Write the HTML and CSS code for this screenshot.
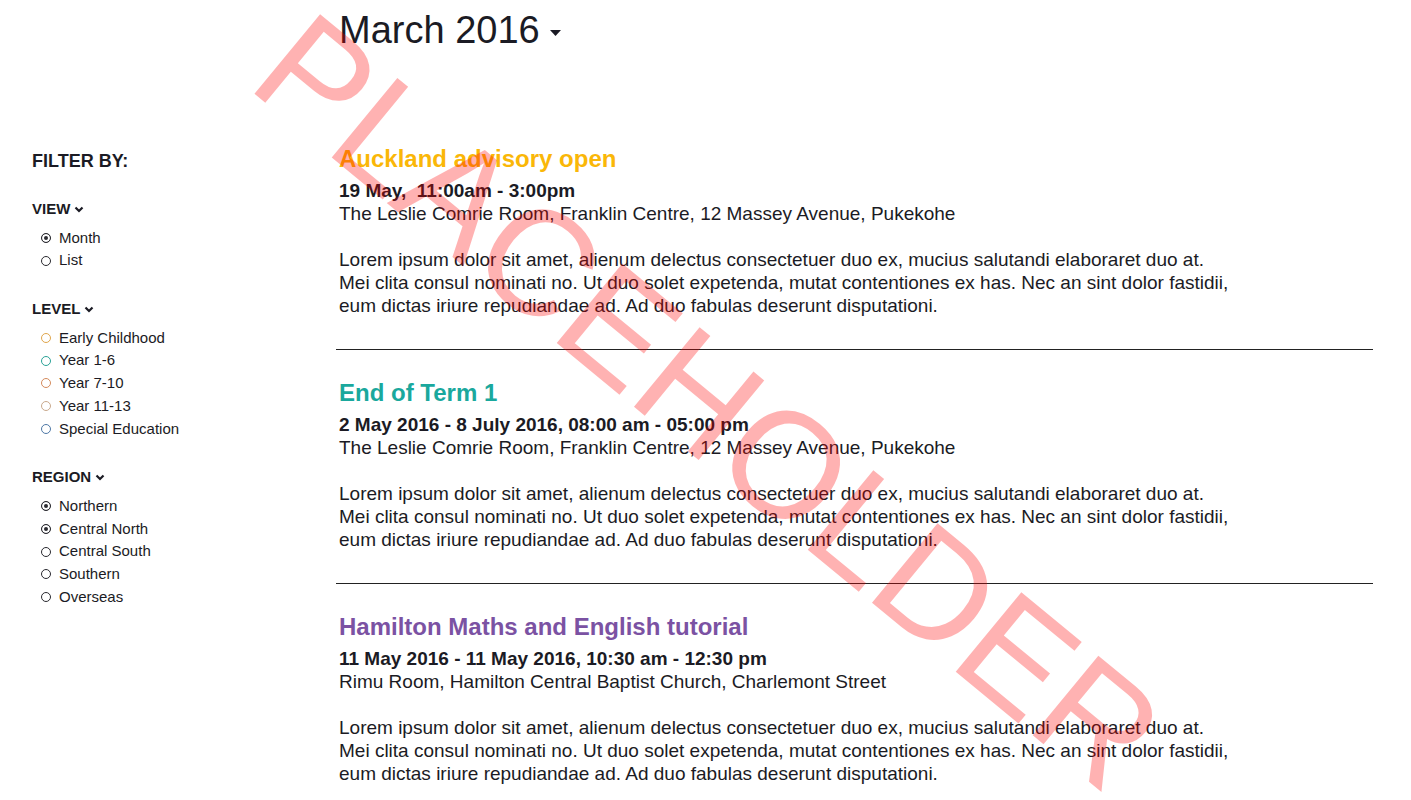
FILE: index.html
```html
<!DOCTYPE html>
<html lang="en">
<head>
<meta charset="utf-8">
<title>Events</title>
<link rel="stylesheet" href="styles.css">
</head>
<body>
<div class="page">
  <aside class="sidebar">
    <h3 class="filter-title">FILTER BY:</h3>

    <div class="group">
      <h4 class="group-title">VIEW <svg class="chev" width="10" height="7" viewBox="0 0 10 7"><polyline points="1.5,1.5 5,5 8.5,1.5" fill="none" stroke="#1b1b24" stroke-width="2.2"/></svg></h4>
      <ul class="options">
        <li><span class="radio checked"></span>Month</li>
        <li><span class="radio"></span>List</li>
      </ul>
    </div>

    <div class="group">
      <h4 class="group-title">LEVEL <svg class="chev" width="10" height="7" viewBox="0 0 10 7"><polyline points="1.5,1.5 5,5 8.5,1.5" fill="none" stroke="#1b1b24" stroke-width="2.2"/></svg></h4>
      <ul class="options">
        <li><span class="radio early"></span>Early Childhood</li>
        <li><span class="radio y16"></span>Year 1-6</li>
        <li><span class="radio y710"></span>Year 7-10</li>
        <li><span class="radio y1113"></span>Year 11-13</li>
        <li><span class="radio special"></span>Special Education</li>
      </ul>
    </div>

    <div class="group">
      <h4 class="group-title">REGION <svg class="chev" width="10" height="7" viewBox="0 0 10 7"><polyline points="1.5,1.5 5,5 8.5,1.5" fill="none" stroke="#1b1b24" stroke-width="2.2"/></svg></h4>
      <ul class="options">
        <li><span class="radio checked"></span>Northern</li>
        <li><span class="radio checked"></span>Central North</li>
        <li><span class="radio"></span>Central South</li>
        <li><span class="radio"></span>Southern</li>
        <li><span class="radio"></span>Overseas</li>
      </ul>
    </div>
  </aside>

  <main class="main">
    <h1 class="month">March 2016<svg class="caret" width="11" height="6" viewBox="0 0 11 6"><polygon points="0,0 11,0 5.5,6" fill="#1b1b24"/></svg></h1>

    <div class="events">
      <article class="event">
        <h2 class="event-title auckland">Auckland advisory open</h2>
        <div class="when">19 May,&nbsp; 11:00am - 3:00pm</div>
        <div class="where">The Leslie Comrie Room, Franklin Centre, 12 Massey Avenue, Pukekohe</div>
        <p class="desc">Lorem ipsum dolor sit amet, alienum delectus consectetuer duo ex, mucius salutandi elaboraret duo at. Mei clita consul nominati no. Ut duo solet expetenda, mutat contentiones ex has. Nec an sint dolor fastidii, eum dictas iriure repudiandae ad. Ad duo fabulas deserunt disputationi.</p>
      </article>
      <article class="event">
        <h2 class="event-title term">End of Term 1</h2>
        <div class="when">2 May 2016 - 8 July 2016, 08:00 am - 05:00 pm</div>
        <div class="where">The Leslie Comrie Room, Franklin Centre, 12 Massey Avenue, Pukekohe</div>
        <p class="desc">Lorem ipsum dolor sit amet, alienum delectus consectetuer duo ex, mucius salutandi elaboraret duo at. Mei clita consul nominati no. Ut duo solet expetenda, mutat contentiones ex has. Nec an sint dolor fastidii, eum dictas iriure repudiandae ad. Ad duo fabulas deserunt disputationi.</p>
      </article>
      <article class="event">
        <h2 class="event-title hamilton">Hamilton Maths and English tutorial</h2>
        <div class="when">11 May 2016 - 11 May 2016, 10:30 am - 12:30 pm</div>
        <div class="where">Rimu Room, Hamilton Central Baptist Church, Charlemont Street</div>
        <p class="desc">Lorem ipsum dolor sit amet, alienum delectus consectetuer duo ex, mucius salutandi elaboraret duo at. Mei clita consul nominati no. Ut duo solet expetenda, mutat contentiones ex has. Nec an sint dolor fastidii, eum dictas iriure repudiandae ad. Ad duo fabulas deserunt disputationi.</p>
      </article>
    </div>
  </main>
</div>
<div class="watermark">PLACEHOLDER</div>
</body>
</html>
```

FILE: styles.css
```css
html, body {
  margin: 0;
  padding: 0;
  background: #fff;
}
body {
  font-family: "Liberation Sans", Arial, Helvetica, sans-serif;
  color: #1b1b24;
  width: 1411px;
  height: 800px;
  overflow: hidden;
  position: relative;
}
.page {
  display: flex;
  align-items: flex-start;
}
.sidebar {
  width: 336px;
  box-sizing: border-box;
  padding: 150px 0 0 32px;
  flex: none;
}
.filter-title {
  margin: 0 0 28px;
  font-size: 18px;
  line-height: 22px;
  font-weight: 700;
}
.group-title {
  margin: 0 0 8.5px;
  font-size: 15px;
  line-height: 18px;
  font-weight: 700;
  display: flex;
  align-items: center;
}
.chev {
  margin-left: 4px;
  margin-top: 1px;
}
.options {
  list-style: none;
  margin: 0 0 28px;
  padding: 0 0 0 9px;
  font-size: 15px;
  line-height: 22.75px;
}
.options li {
  display: flex;
  align-items: center;
}
.radio {
  width: 10px;
  height: 10px;
  box-sizing: border-box;
  border: 1px solid #2a2a30;
  border-radius: 50%;
  margin-right: 8px;
  flex: none;
}
.radio.checked {
  background: #2a2a30;
  box-shadow: inset 0 0 0 2px #fff;
}
.radio.early { border-color: #e0a64c; }
.radio.y16 { border-color: #2aa297; }
.radio.y710 { border-color: #d48a5c; }
.radio.y1113 { border-color: #c9a98c; }
.radio.special { border-color: #4e78a6; }

.main {
  width: 1037px;
  flex: none;
  padding-top: 8px;
}
.month {
  margin: 0 0 90px 3px;
  font-size: 38px;
  line-height: 45.6px;
  font-weight: 400;
  display: flex;
  align-items: center;
}
.caret {
  margin-left: 10px;
  margin-top: 4px;
}
.event {
  padding: 28px 0 32px 3px;
  border-bottom: 1px solid #222;
}
.event:first-child {
  padding-top: 0;
}
.event:last-child {
  border-bottom: none;
}
.event-title {
  margin: 0 0 6px;
  font-size: 24px;
  line-height: 29px;
  font-weight: 700;
}
.event-title.auckland { color: #fab708; }
.event-title.term { color: #1aa89d; }
.event-title.hamilton { color: #7b52a3; }
.when {
  font-size: 19px;
  line-height: 23px;
  font-weight: 700;
}
.where {
  font-size: 19px;
  line-height: 23px;
}
.desc {
  margin: 23px 0 0;
  max-width: 900px;
  font-size: 19px;
  line-height: 23px;
}
.watermark {
  position: absolute;
  left: 245px;
  top: -41px;
  font-family: "Liberation Sans", Arial, sans-serif;
  font-size: 150px;
  line-height: 150px;
  color: rgba(255, 0, 0, 0.3);
  white-space: nowrap;
  transform-origin: 0 127px;
  transform: rotate(39.5deg);
  pointer-events: none;
}
```
